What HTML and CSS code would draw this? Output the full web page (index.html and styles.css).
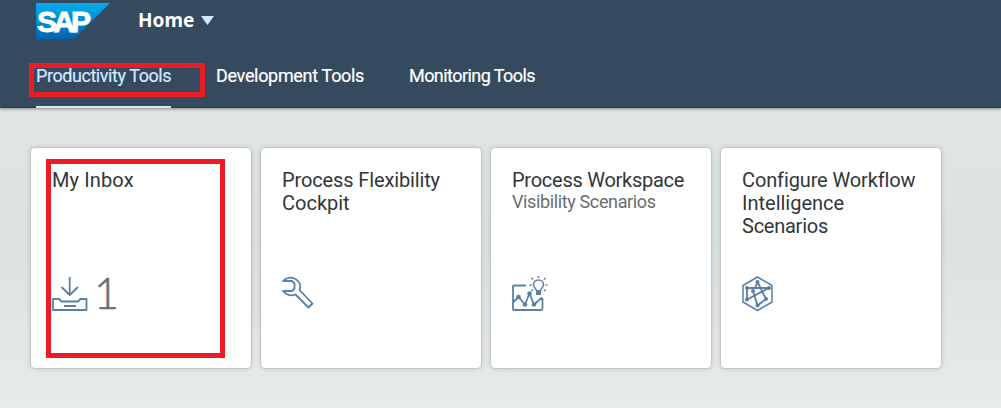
FILE: index.html
```html
<!DOCTYPE html>
<html lang="en">
<head>
<meta charset="utf-8">
<title>Home</title>
<link rel="stylesheet" href="styles.css">
</head>
<body>
<header class="shell">
  <div class="shell-bar">
    <svg class="logo" width="74" height="37" viewBox="0 0 74 37">
      <defs><linearGradient id="sap" x1="0" y1="0" x2="0" y2="1"><stop offset="0" stop-color="#00aeef"/><stop offset="1" stop-color="#0065b3"/></linearGradient></defs>
      <path d="M0 0H74L38 36H0Z" fill="url(#sap)"/>
      <text class="logo-text" x="1" y="28.500">SAP</text>
    </svg>
    <div class="home"><span class="home-label">Home</span><svg width="13" height="9" viewBox="0 0 13 9"><path d="M0 0H13L6.500 9Z" fill="#d1e8ff"/></svg></div>
  </div>
  <nav class="tabs">
    <a class="tab selected">Productivity Tools</a>
    <a class="tab development">Development Tools</a>
    <a class="tab monitoring">Monitoring Tools</a>
  </nav>
</header>
<main class="tiles">
  <section class="tile">
    <h2 class="title inbox">My Inbox</h2>
    <div class="content">
      <svg class="icon" width="36" height="36" viewBox="0 0 36 36"><path d="M17.700 1V19M9.500 11L17.700 19L26 11M1 23H7L9.500 25.500H26L28.500 23H34.500V34H1ZM12 30H24"/></svg>
      <span class="count">1</span>
    </div>
  </section>
  <section class="tile">
    <h2 class="title"><span class="flexibility">Process Flexibility</span><br><span class="cockpit">Cockpit</span></h2>
    <div class="content">
      <svg class="icon" width="36" height="36" viewBox="0 0 36 36"><path d="M1 5C4 1.500 9 .8 13 2.800C18 5.200 19.500 10 17.500 14L30.500 27.500L26.500 31.500L13.500 18.500C8.500 20.500 4 18.500 1 15H10L12.500 12.500V7.500L10 5Z"/></svg>
    </div>
  </section>
  <section class="tile">
    <h2 class="title workspace">Process Workspace</h2>
    <p class="subtitle">Visibility Scenarios</p>
    <div class="content">
      <svg class="icon" width="36" height="36" viewBox="0 0 36 36"><path d="M14 9.500H2Q1 9.500 1 10.500V33Q1 34 2 34H29Q30.500 34 30.500 32.500V22M1.500 26L6.500 21L13 28.500L17.500 17.500L22 28.500L30 21.500"/><g class="solid"><circle cx="6.500" cy="21" r="2.300"/><circle cx="13" cy="28.500" r="2.300"/><circle cx="17.500" cy="17.500" r="2.300"/><circle cx="22" cy="28.500" r="2.300"/><rect x="24" y="14" width="5" height="5"/></g><path class="thin" d="M24.500 15C24 12 21.500 11.500 21.500 8.500C21.500 6 23.500 4 26.500 4S31.500 6 31.500 8.500C31.500 11.500 29 12 28.500 15ZM26.500 0V2M19.500 2L21 3.500M33.500 2L32 3.500M17.500 9H19.500M33.500 9H35.500M19.500 15L21 13.500M33.500 15L32 13.500"/></svg>
    </div>
  </section>
  <section class="tile">
    <h2 class="title"><span class="configure">Configure Workflow</span><br><span class="intelligence">Intelligence</span><br><span class="scenarios">Scenarios</span></h2>
    <div class="content">
      <svg class="icon" width="36" height="36" viewBox="0 0 36 36"><path class="hexagon" d="M15.500 1L30 9.500V26L15.500 34.500L1 26V9.500Z"/><path d="M5 12H27L5 23.500M15.500 6L24 23L15.500 29.500L11 15M15.500 6L13 12M5 12V23.500"/><g class="solid"><circle cx="15.500" cy="6" r="2"/><circle cx="5" cy="12" r="2"/><circle cx="27" cy="12" r="2"/><circle cx="11" cy="15" r="2"/><circle cx="5" cy="23.500" r="2"/><circle cx="24" cy="23" r="2"/><circle cx="15.500" cy="29.500" r="2"/></g></svg>
    </div>
  </section>
</main>
<div class="marker marker-tab"></div>
<div class="marker marker-tile"></div>
</body>
</html>
```
FILE: styles.css
```css
* { box-sizing: border-box; }
body { margin: 0; height: 408px; overflow: hidden; position: relative; background: linear-gradient(#dfe4e4, #dfe4e4 35%, #dce1e2 60%, #e8ebeb); font-family: Roboto, sans-serif; color: #32363a; }
.shell { height: 108px; background: #354a5f; box-shadow: inset 0 -1px #293b4c, 0 1px 3px rgba(0,0,0,.4); display: flex; flex-direction: column; justify-content: space-between; }
.shell-bar { display: flex; padding: 3px 0 0 36px; }
.logo-text { font: bold 30px "Liberation Sans", sans-serif; letter-spacing: -3.8px; fill: #fff; stroke: #fff; stroke-width: .9px; }
.home { display: flex; align-items: center; gap: 7px; height: 34px; margin-left: 28px; }
.home-label { width: 56px; font: bold 19px/34px "Noto Sans", sans-serif; color: #fff; }
.tabs { display: flex; padding-left: 36px; height: 44px; }
.tab { height: 44px; font-size: 18px; line-height: 24px; color: #fff; white-space: nowrap; -webkit-text-stroke: .2px; }
.selected { width: 135px; color: #d1e8ff; border-bottom: 2px solid #d1e8ff; letter-spacing: -.44px; }
.development { margin-left: 45px; width: 148px; letter-spacing: -.32px; }
.monitoring { margin-left: 45px; letter-spacing: -.56px; }
.tiles { display: flex; gap: 8px; padding: 39px 0 0 30px; }
.tile { width: 222px; height: 222px; padding: 21px; background: #fff; border: 1px solid #c3c6c7; border-radius: 5px; box-shadow: 0 0 5px rgba(0,0,0,.13); display: flex; flex-direction: column; }
.title { margin: 0; font-size: 20px; font-weight: 400; line-height: 23px; white-space: nowrap; }
.inbox { letter-spacing: .12px; }
.flexibility { letter-spacing: -.13px; }
.workspace { letter-spacing: -.26px; }
.configure { letter-spacing: -.13px; }
.scenarios { letter-spacing: -.25px; }
.subtitle { margin: -2px 0 0; font-size: 18px; line-height: 23px; color: #6a6d70; white-space: nowrap; letter-spacing: -.37px; }
.content { display: flex; gap: 6px; align-items: center; height: 44px; margin-top: auto; margin-bottom: 31px; }
.icon { fill: none; stroke: #5b7fa5; stroke-width: 1.8; stroke-linejoin: round; flex: none; overflow: visible; }
.thin, .hexagon { stroke-width: 1.5; }
.solid { fill: #5b7fa5; stroke: none; }
.count { font: 300 43px/44px Lato, sans-serif; color: #6a6d70; -webkit-text-stroke: .6px #6a6d70; padding-bottom: 3px; }
.marker { position: absolute; border: 5px solid #ed1c24; }
.marker-tab { left: 29px; top: 63px; width: 176px; height: 34px; }
.marker-tile { left: 46px; top: 159px; width: 179px; height: 199px; }
```
